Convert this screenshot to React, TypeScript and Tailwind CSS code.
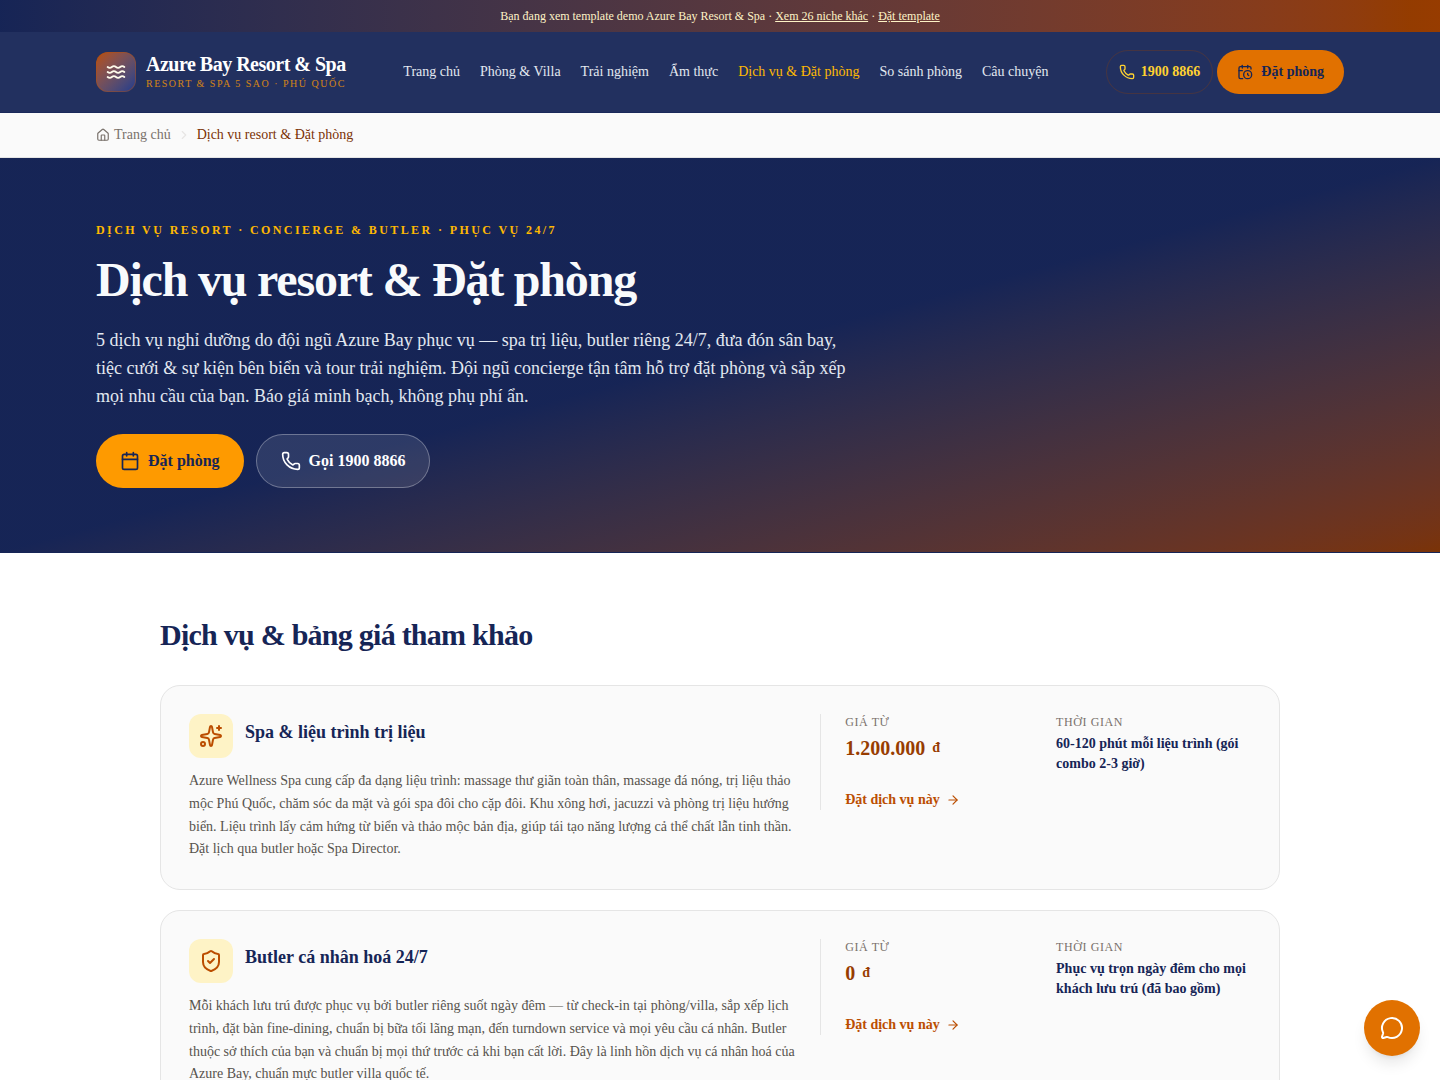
import {
  ArrowRight,
  Calendar,
  CalendarClock,
  ChevronRight,
  House,
  MessageCircle,
  Phone,
  ShieldCheck,
  Sparkles,
  Waves,
} from 'lucide-react';
import type { LucideIcon } from 'lucide-react';

const navItems = [
  'Trang chủ',
  'Phòng & Villa',
  'Trải nghiệm',
  'Ẩm thực',
  'Dịch vụ & Đặt phòng',
  'So sánh phòng',
  'Câu chuyện',
];

type Service = {
  icon: LucideIcon;
  title: string;
  description: string;
  price: string;
  duration: string;
};

const services: Service[] = [
  {
    icon: Sparkles,
    title: 'Spa & liệu trình trị liệu',
    description:
      'Azure Wellness Spa cung cấp đa dạng liệu trình: massage thư giãn toàn thân, massage đá nóng, trị liệu thảo mộc Phú Quốc, chăm sóc da mặt và gói spa đôi cho cặp đôi. Khu xông hơi, jacuzzi và phòng trị liệu hướng biển. Liệu trình lấy cảm hứng từ biển và thảo mộc bản địa, giúp tái tạo năng lượng cả thể chất lẫn tinh thần. Đặt lịch qua butler hoặc Spa Director.',
    price: '1.200.000',
    duration: '60-120 phút mỗi liệu trình (gói combo 2-3 giờ)',
  },
  {
    icon: ShieldCheck,
    title: 'Butler cá nhân hoá 24/7',
    description:
      'Mỗi khách lưu trú được phục vụ bởi butler riêng suốt ngày đêm — từ check-in tại phòng/villa, sắp xếp lịch trình, đặt bàn fine-dining, chuẩn bị bữa tối lãng mạn, đến turndown service và mọi yêu cầu cá nhân. Butler thuộc sở thích của bạn và chuẩn bị mọi thứ trước cả khi bạn cất lời. Đây là linh hồn dịch vụ cá nhân hoá của Azure Bay, chuẩn mực butler villa quốc tế.',
    price: '0',
    duration: 'Phục vụ trọn ngày đêm cho mọi khách lưu trú (đã bao gồm)',
  },
];

const DemoBar = () => (
  <div className="bg-linear-to-r from-blue-950 to-amber-800 px-4 py-2 text-center text-xs text-amber-100">
    Bạn đang xem template demo Azure Bay Resort & Spa ·{' '}
    <a href="#niches" className="underline">Xem 26 niche khác</a> ·{' '}
    <a href="#order" className="underline">Đặt template</a>
  </div>
);

const Header = () => (
  <header className="border-b border-blue-950/60 bg-blue-950/95">
    <div className="mx-auto flex h-20 max-w-7xl items-center justify-between px-4">
      <a href="#home" className="flex items-center gap-2.5">
        <span className="flex size-10 items-center justify-center rounded-xl bg-linear-to-br from-amber-700 to-blue-900 text-amber-50 ring-1 ring-amber-700/40 ring-inset">
          <Waves className="size-5" strokeWidth={2.25} />
        </span>
        <span>
          <span className="block text-xl leading-6 font-bold tracking-tight text-white">Azure Bay Resort & Spa</span>
          <span className="block text-[10px] leading-4 tracking-[0.15em] text-amber-500/80 uppercase">
            Resort & Spa 5 sao · Phú Quốc
          </span>
        </span>
      </a>

      <nav className="flex items-center gap-5 text-sm">
        {navItems.map((item) => (
          <a
            key={item}
            href="#nav"
            className={item === 'Dịch vụ & Đặt phòng' ? 'text-amber-400' : 'text-slate-200'}
          >
            {item}
          </a>
        ))}
      </nav>

      <div className="flex items-center gap-1">
        <a
          href="tel:19008866"
          className="flex h-11 items-center gap-1.5 rounded-full border border-amber-800/30 px-3 text-sm font-bold text-amber-300"
        >
          <Phone className="size-4" />
          1900 8866
        </a>
        <button className="flex h-11 items-center gap-2 rounded-full bg-amber-600 px-5 text-sm font-bold text-blue-950">
          <CalendarClock className="size-4" />
          Đặt phòng
        </button>
      </div>
    </div>
  </header>
);

const Breadcrumb = () => (
  <div className="border-b border-neutral-200 bg-neutral-50">
    <nav aria-label="Breadcrumb" className="mx-auto flex max-w-7xl items-center gap-1.5 px-4 py-3 text-sm">
      <a href="#home" className="flex items-center gap-1 text-stone-500">
        <House className="size-3.5" />
        Trang chủ
      </a>
      <ChevronRight className="size-3.5 text-stone-200" />
      <span className="text-amber-900">Dịch vụ resort & Đặt phòng</span>
    </nav>
  </div>
);

const Hero = () => (
  <section className="border-b border-blue-950 bg-linear-to-br from-blue-950 via-blue-950 to-amber-900">
    <div className="mx-auto max-w-7xl px-4 py-16">
      <p className="text-xs font-bold tracking-[0.2em] text-amber-400 uppercase">
        Dịch vụ resort · Concierge & Butler · Phục vụ 24/7
      </p>
      <h1 className="mt-3 text-5xl leading-[60px] font-bold tracking-tight text-slate-50">
        Dịch vụ resort & Đặt phòng
      </h1>
      <p className="mt-4 max-w-3xl text-lg leading-7 text-slate-200">
        5 dịch vụ nghỉ dưỡng do đội ngũ Azure Bay phục vụ — spa trị liệu, butler riêng 24/7, đưa đón sân bay, tiệc cưới
        & sự kiện bên biển và tour trải nghiệm. Đội ngũ concierge tận tâm hỗ trợ đặt phòng và sắp xếp mọi nhu cầu của
        bạn. Báo giá minh bạch, không phụ phí ẩn.
      </p>
      <div className="mt-6 flex gap-3">
        <button className="flex h-[54px] items-center gap-2 rounded-full bg-amber-500 px-6 font-bold text-blue-950">
          <Calendar className="size-5" />
          Đặt phòng
        </button>
        <a
          href="tel:19008866"
          className="flex h-[54px] items-center gap-2 rounded-full border border-white/30 bg-white/10 px-6 font-bold text-white"
        >
          <Phone className="size-5" />
          Gọi 1900 8866
        </a>
      </div>
    </div>
  </section>
);

const ServiceCard = ({ icon: Icon, title, description, price, duration }: Service) => (
  <article className="grid grid-cols-12 items-start gap-5 rounded-[20px] border border-neutral-200 bg-neutral-50 p-7">
    <div className="col-span-7">
      <div className="flex items-start gap-3">
        <span className="flex size-11 shrink-0 items-center justify-center rounded-xl bg-amber-100 text-amber-700">
          <Icon className="size-6" />
        </span>
        <h3 className="mt-1 text-lg leading-7 font-bold text-blue-950">{title}</h3>
      </div>
      <p className="mt-3 text-sm leading-relaxed text-stone-600">{description}</p>
    </div>

    <div className="col-span-5 grid grid-cols-2 gap-4 border-l border-neutral-200 pl-6">
      <div>
        <p className="text-xs tracking-wider text-stone-500 uppercase">Giá từ</p>
        <p className="mt-1 text-xl leading-7 font-bold text-amber-800">
          {price} <span className="ml-0.5 align-[3px] text-sm leading-none">đ</span>
        </p>
      </div>
      <div>
        <p className="text-xs tracking-wider text-stone-500 uppercase">Thời gian</p>
        <p className="mt-1 text-sm font-bold text-blue-950">{duration}</p>
      </div>
      <a href="#book" className="col-span-2 flex items-center gap-1.5 text-sm font-bold text-amber-700">
        Đặt dịch vụ này
        <ArrowRight className="size-3.5" />
      </a>
    </div>
  </article>
);

const App = () => {
  return (
    <div className="min-h-screen bg-white font-['Liberation_Serif',serif]">
      <DemoBar />
      <Header />
      <Breadcrumb />
      <Hero />

      <main className="mx-auto max-w-6xl px-4 py-16">
        <h2 className="text-3xl font-bold tracking-tight text-blue-950">Dịch vụ & bảng giá tham khảo</h2>
        <div className="mt-8 flex flex-col gap-5">
          {services.map((service) => (
            <ServiceCard key={service.title} {...service} />
          ))}
        </div>
      </main>

      {/* Floating chat */}
      <button
        aria-label="Chat"
        className="fixed right-5 bottom-6 flex size-14 items-center justify-center rounded-full bg-amber-600 text-white shadow-lg"
      >
        <MessageCircle className="size-6" />
      </button>
    </div>
  );
};

export default App;
